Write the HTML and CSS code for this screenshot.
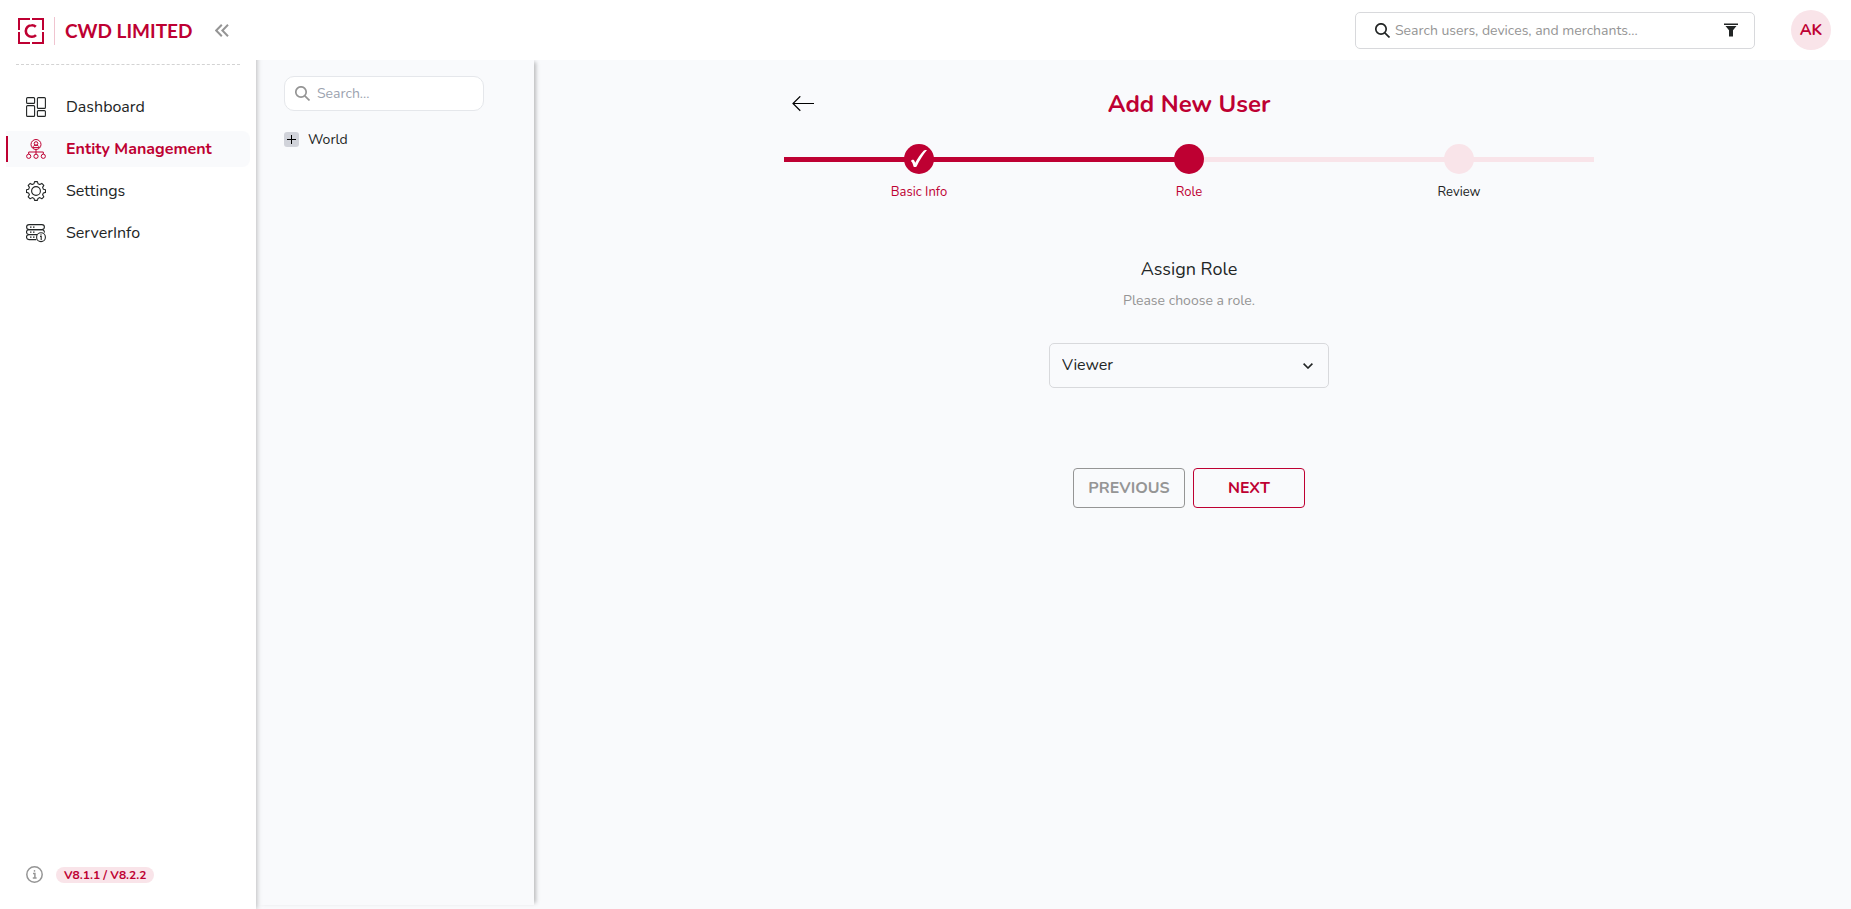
FILE: index.html
```html
<!DOCTYPE html>
<html lang="en">
<head>
<meta charset="utf-8">
<meta name="viewport" content="width=device-width, initial-scale=1">
<title>Add New User</title>
<link rel="stylesheet" href="styles.css">
</head>
<body>
<div class="app">
  <aside class="sidebar">
    <div class="brand">
      <svg width="26" height="26" viewBox="0 0 26 26" fill="none" stroke="currentColor" stroke-width="2" aria-hidden="true">
        <path d="M12 1H1v11M14 1h11v11M1 14v11h11M25 14v11H14"/>
        <path d="M17.800 8.700A5.400 5.400 0 0 0 13.600 7.200a5.800 5.800 0 0 0 0 11.600 5.400 5.400 0 0 0 4.400-1.700" stroke-width="2.600"/>
      </svg>
      <span class="brand-name">CWD LIMITED</span>
      <button class="icon-button collapse" type="button" aria-label="Collapse menu">
        <svg width="14" height="13" viewBox="0 0 14 13" fill="none" stroke="currentColor" stroke-width="2" aria-hidden="true"><path d="M6.800.8 1.200 6.500l5.600 5.700M13 .8 7.400 6.500l5.600 5.700"/></svg>
      </button>
    </div>
    <nav class="nav">
      <a class="nav-item" href="#dashboard">
        <svg width="20" height="20" viewBox="0 0 20 20" fill="none" stroke="currentColor" stroke-width="1.100" aria-hidden="true">
          <rect x=".6" y=".6" width="8" height="5.800" rx="1"/><rect x="11.400" y=".6" width="8" height="10.800" rx="1"/><rect x=".6" y="8.600" width="8" height="10.800" rx="1"/><rect x="11.400" y="13.600" width="8" height="5.800" rx="1"/>
        </svg>
        <span>Dashboard</span>
      </a>
      <a class="nav-item nav-item-active" href="#entities" aria-current="page">
        <svg width="20" height="20" viewBox="0 0 20 20" fill="none" stroke="currentColor" stroke-width="1" aria-hidden="true">
          <circle cx="10" cy="5.500" r="5"/><circle cx="10" cy="4.500" r="1.800"/><path d="M6.800 8.600c.2-1.700 1.500-2.400 3.200-2.400s3 .7 3.200 2.400zM10 10.500v4.500M2.700 15v-2h14.600v2"/><circle cx="2.700" cy="17.300" r="2.100"/><circle cx="10" cy="17.300" r="2.100"/><circle cx="17.300" cy="17.300" r="2.100"/>
        </svg>
        <span>Entity Management</span>
      </a>
      <a class="nav-item" href="#settings">
        <svg width="20" height="20" viewBox="0 0 20 20" fill="none" stroke="currentColor" stroke-width="1.100" stroke-linejoin="round" aria-hidden="true">
          <path d="M8.600.6h2.800l.6 2.100 1.800.8 2-1.100 2 2-1.200 2 .8 1.800 2.100.5v2.700l-2.100.6-.8 1.800 1.200 2-2 2-2-1.200-1.800.8-.6 2h-2.800l-.6-2-1.800-.8-2 1.200-2-2 1.200-2-.8-1.800-2.100-.6V8.700l2.100-.5.8-1.800-1.200-2 2-2 2 1.100L8 2.700z"/><circle cx="10" cy="10" r="4.400"/>
        </svg>
        <span>Settings</span>
      </a>
      <a class="nav-item" href="#server">
        <svg width="20" height="20" viewBox="0 0 20 20" fill="none" stroke="currentColor" stroke-width="1.100" aria-hidden="true">
          <rect x=".6" y="1.600" width="17.800" height="5" rx="2.500"/><path d="M11 11.600H3a2.500 2.500 0 0 1 0-5h13a2.500 2.500 0 0 1 2.300 3M10.300 16.600H3a2.500 2.500 0 0 1 0-5"/><path d="M4 4.100h1.500M7 4.100h1.500M4 9.100h1.500M7 9.100h1.500M4 14.100h1.500M7 14.100h1.500"/><circle cx="15" cy="14.200" r="4.400"/><path d="M14 13.400h1.200V17M15 11.200v1"/>
        </svg>
        <span>ServerInfo</span>
      </a>
    </nav>
    <footer class="version">
      <svg width="17" height="17" viewBox="0 0 17 17" fill="none" stroke="currentColor" stroke-width="1.500" aria-hidden="true"><circle cx="8.500" cy="8.500" r="7.700"/><path d="M7 7.600h1.900V12M6.800 12h3.800"/><path d="M7.800 4.900h1.400" stroke-width="1.600"/></svg>
      <span class="version-tag">V8.1.1 / V8.2.2</span>
    </footer>
  </aside>

  <header class="topbar">
    <div class="global-search">
      <svg width="15" height="15" viewBox="0 0 15 15" fill="none" stroke="currentColor" stroke-width="1.700" aria-hidden="true"><circle cx="6" cy="6" r="5.200"/><path d="m9.800 9.800 4.700 4.700"/></svg>
      <input type="search" aria-label="Search users, devices, and merchants" placeholder="Search users, devices, and merchants...">
      <button class="icon-button" type="button" aria-label="Filter">
        <svg width="14" height="14" viewBox="0 0 14 14" fill="currentColor" aria-hidden="true"><path d="M0 .5h14V2H0zM1.500 3h11L9 7.300v6.200H5V7.300z"/></svg>
      </button>
    </div>
    <button class="avatar" type="button" aria-label="Account AK">AK</button>
  </header>

  <div class="workspace">
    <section class="tree" aria-label="Entities">
      <div class="tree-search">
        <svg width="15" height="15" viewBox="0 0 15 15" fill="none" stroke="currentColor" stroke-width="1.700" aria-hidden="true"><circle cx="6" cy="6" r="5.200"/><path d="m9.800 9.800 4.700 4.700"/></svg>
        <input type="search" aria-label="Search entities" placeholder="Search...">
      </div>
      <div class="tree-node">
        <button class="expander" type="button" aria-label="Expand World">
          <svg width="9" height="9" viewBox="0 0 9 9" stroke="currentColor" aria-hidden="true"><path d="M0 4.500h9M4.500 0v9"/></svg>
        </button>
        <span>World</span>
      </div>
    </section>

    <main class="main">
      <div class="wizard">
        <div class="wizard-head">
          <button class="icon-button back" type="button" aria-label="Back">
            <svg width="22" height="16" viewBox="0 0 22 16" fill="none" stroke="currentColor" stroke-width="1.200" aria-hidden="true"><path d="M22 7.500H1M8.300.3 1 7.500l7.300 7.200"/></svg>
          </button>
          <h1>Add New User</h1>
        </div>
        <ol class="steps">
          <li class="step step-done">
            <span class="dot"><svg width="16" height="18" viewBox="0 0 16 18" fill="currentColor" aria-hidden="true"><path d="M0 11.200c.6-1.800 2.900-2 3.500-.1l.7 1.700C6.600 8.200 9.600 3.800 12.900.5c.9-.5 2-.7 3.100-.4C11.800 5.200 8.800 10 5.600 16.400c-.8.800-2.400.9-3.100 0C1.900 14.300 1.300 12 0 11.200z"/></svg></span>
            <span>Basic Info</span>
          </li>
          <li class="step step-current" aria-current="step"><span class="dot"></span><span>Role</span></li>
          <li class="step"><span class="dot"></span><span>Review</span></li>
        </ol>
        <form class="role-form">
          <h2><label for="role">Assign Role</label></h2>
          <p>Please choose a role.</p>
          <div class="select">
            <select id="role"><option>Viewer</option></select>
            <svg width="10" height="6" viewBox="0 0 10 6" fill="none" stroke="currentColor" stroke-width="1.600" aria-hidden="true"><path d="m.6.600 4.400 4.400L9.400.6"/></svg>
          </div>
          <div class="actions">
            <button class="button" type="button">PREVIOUS</button>
            <button class="button button-primary" type="button">NEXT</button>
          </div>
        </form>
      </div>
    </main>
  </div>
</div>
</body>
</html>
```
FILE: styles.css
```css
:root {
  --brand: #be0032;
  --brand-soft: #f9e4e9;
  --surface: #f9fafc;
  --text: #222525;
  --muted: #959595;
  --line: #d8d9dc;
}

* { box-sizing: border-box; }

body {
  margin: 0;
  background: var(--surface);
  color: var(--text);
  font: 14px/21px Nunito, "Open Sans", "Noto Sans", sans-serif;
}

button, input, select { font: inherit; color: inherit; }
button { cursor: pointer; }
svg { display: block; flex: none; }

.app {
  display: grid;
  grid-template: 60px 1fr / 256px 1fr;
  min-height: 100vh;
}

.icon-button {
  padding: 0;
  border: 0;
  background: none;
}

/* Sidebar */
.sidebar {
  grid-row: 1 / 3;
  z-index: 1;
  display: flex;
  flex-direction: column;
  background: #fff;
  box-shadow: 1px 0 5px rgba(0, 0, 0, 0.25);
}

.brand {
  display: flex;
  align-items: center;
  height: 65px;
  margin: 0 16px;
  padding: 0 11px 2px 2px;
  border-bottom: 1px dashed #d3d3d3;
  color: var(--brand);
}

.brand-name {
  margin-left: 10px;
  padding-left: 10px;
  border-left: 1px solid #f0c4d0;
  font: bold 19px/28px Lato, sans-serif;
  white-space: nowrap;
}

.collapse {
  margin: 0 0 2px auto;
  color: var(--muted);
}

.nav {
  display: grid;
  gap: 6px;
  padding: 24px 6px 0;
}

.nav-item {
  display: flex;
  align-items: center;
  gap: 20px;
  height: 36px;
  padding-left: 20px;
  border-radius: 0 8px 8px 0;
  color: inherit;
  font-size: 16px;
  text-decoration: none;
}

.nav-item-active {
  background: linear-gradient(var(--brand), var(--brand)) left center / 2px 26px no-repeat var(--surface);
  color: var(--brand);
  font-weight: 700;
}

.version {
  display: flex;
  align-items: center;
  gap: 13px;
  margin-top: auto;
  padding: 0 26px 26px;
  color: var(--muted);
}

.version-tag {
  padding: 0 8px;
  border-radius: 8px;
  background: var(--brand-soft);
  color: var(--brand);
  font-size: 12px;
  font-weight: 700;
  line-height: 16px;
}

/* Top bar */
.topbar {
  z-index: 2;
  display: flex;
  align-items: center;
  justify-content: flex-end;
  gap: 36px;
  padding-right: 20px;
  background: #fff;
}

.global-search {
  display: flex;
  align-items: center;
  gap: 5px;
  width: 400px;
  height: 37px;
  padding: 0 16px 0 19px;
  border: 1px solid var(--line);
  border-radius: 5px;
}

.global-search input, .tree-search input {
  flex: 1;
  min-width: 0;
  padding: 0;
  border: 0;
  outline: 0;
  background: none;
}

.global-search input::placeholder { color: var(--muted); }

.avatar {
  width: 40px;
  height: 40px;
  padding: 0;
  border: 0;
  border-radius: 50%;
  background: var(--brand-soft);
  color: var(--brand);
  font-size: 16px;
  font-weight: 700;
}

/* Workspace */
.workspace {
  display: grid;
  grid-template-columns: 278px 1fr;
}

.tree {
  margin-bottom: 4px;
  padding: 16px 50px 0 28px;
  box-shadow: 4px 0 4px -2px rgba(0, 0, 0, 0.25);
}

.tree-search {
  display: flex;
  align-items: center;
  gap: 7px;
  height: 35px;
  padding: 0 10px;
  border: 1px solid #e5e7eb;
  border-radius: 10px;
  background: #fff;
  color: var(--muted);
}

.tree-search input::placeholder { color: #9ca3af; }

.tree-node {
  display: flex;
  align-items: center;
  gap: 9px;
  margin-top: 18px;
}

.expander {
  display: grid;
  place-items: center;
  width: 15px;
  height: 15px;
  padding: 0;
  border: 0;
  border-radius: 3px;
  background: #d1d3da;
  color: #000;
}

.main { padding: 24px 7px 24px 0; }

.wizard {
  width: 62%;
  max-width: 810px;
  margin: 0 auto;
}

.wizard-head {
  display: grid;
  grid-template-columns: 30px 1fr 30px;
  align-items: center;
}

.back {
  justify-self: end;
  color: #000;
}

.wizard-head h1 {
  margin: 0;
  color: var(--brand);
  font-size: 24px;
  font-weight: 700;
  line-height: 40px;
  text-align: center;
}

.steps {
  display: grid;
  grid-template-columns: repeat(3, 1fr);
  margin: 20px 0 0;
  padding: 0;
  list-style: none;
  background:
    linear-gradient(var(--brand), var(--brand)) 0 13px / 50% 5px no-repeat,
    linear-gradient(var(--brand-soft), var(--brand-soft)) 0 13px / 100% 5px no-repeat;
}

.step {
  display: grid;
  justify-items: center;
  gap: 8px;
  font-size: 13px;
}

.dot {
  display: grid;
  place-items: center;
  width: 30px;
  height: 30px;
  border-radius: 50%;
  background: var(--brand-soft);
}

.step-done, .step-current { color: var(--brand); }
.step-done .dot, .step-current .dot { background: var(--brand); color: #fff; }

/* Role form */
.role-form {
  display: flex;
  flex-direction: column;
  align-items: center;
  margin-top: 54px;
}

.role-form h2 {
  margin: 0;
  font-size: 18px;
  font-weight: 400;
  line-height: 24px;
}

.role-form p {
  margin: 9px 0 32px;
  color: var(--muted);
}

.select {
  display: grid;
  align-items: center;
  width: 280px;
}

.select select, .select svg { grid-area: 1 / 1; }

.select select {
  height: 45px;
  padding: 0 12px;
  border: 1px solid var(--line);
  border-radius: 5px;
  background: none;
  font-size: 16px;
  appearance: none;
}

.select svg {
  justify-self: end;
  margin-right: 16px;
  pointer-events: none;
}

.actions {
  display: flex;
  gap: 8px;
  margin-top: 80px;
}

.button {
  width: 112px;
  height: 40px;
  padding: 0;
  border: 1px solid var(--muted);
  border-radius: 4px;
  background: none;
  color: var(--muted);
  font-size: 16px;
  font-weight: 700;
}

.button-primary {
  border-color: var(--brand);
  color: var(--brand);
}
```
